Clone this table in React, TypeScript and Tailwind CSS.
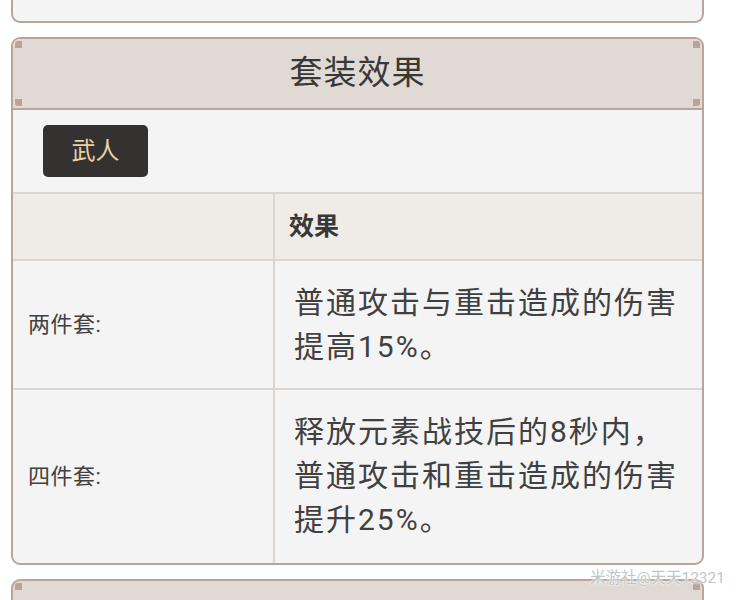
const font = { fontFamily: 'Roboto, "Noto Sans CJK SC", "Noto Sans", sans-serif' }

const Corner = ({ className }: { className: string }) => (
  <span className={`absolute w-[7px] h-[7px] bg-[#b9a49b] ${className}`} />
)

const rows = [
  { label: "两件套:", text: ["普通攻击与重击造成的伤害", "提高15%。"] },
  { label: "四件套:", text: ["释放元素战技后的8秒内，", "普通攻击和重击造成的伤害", "提升25%。"] },
]

export default function App() {
  return (
    <div className="relative w-[736px] h-[600px] overflow-hidden bg-white" style={font}>
      {/* previous card, cut off at the top */}
      <div className="ml-[11px] w-[693px] h-[23px] bg-[#f4f4f4] border-2 border-t-0 border-[#b9a59c] rounded-b-[9px]" />

      {/* set effect card */}
      <div className="ml-[11px] mt-[14px] w-[693px] bg-[#f4f4f4] border-2 border-[#b9a59c] rounded-[9px] overflow-hidden">
        <div className="relative h-[71px] bg-[#e1dad4] border-b-2 border-[#b9a59c] flex items-center justify-center pb-[2px]">
          <Corner className="left-[2px] top-[2px] rounded-tl-[3px]" />
          <Corner className="left-[2px] bottom-[2px] rounded-bl-[3px]" />
          <Corner className="right-[2px] top-[2px] rounded-tr-[3px]" />
          <Corner className="right-[2px] bottom-[2px] rounded-br-[3px]" />
          <span className="text-[33px] leading-none text-[#383838] tracking-[1px]">套装效果</span>
        </div>

        <div className="pl-[30px] pt-[15px] pb-[15px]">
          <div className="w-[105px] h-[52px] rounded-[5px] bg-[#333231] flex items-center justify-center">
            <span className="text-[24px] text-[#e8d3a4] leading-none">武人</span>
          </div>
        </div>

        <div className="grid grid-cols-[262px_1fr] border-t-2 border-[#ddd6d0]">
          <div className="h-[67px] bg-[#efebe7] border-r-2 border-b-2 border-[#ddd6d0]" />
          <div className="h-[67px] bg-[#efebe7] border-b-2 border-[#ddd6d0] flex items-center pl-[14px]">
            <span className="text-[25px] font-bold text-[#383838]">效果</span>
          </div>
          {rows.map((row, i) => {
            const last = i === rows.length - 1
            return (
              <div key={i} className="contents">
                <div className={`flex items-center pl-[15px] border-r-2 border-[#ddd6d0] ${last ? "" : "border-b-2"}`}>
                  <span className="text-[22px] text-[#404040] tracking-[0.5px]">{row.label}</span>
                </div>
                <div className={`flex items-center pl-[19px] pt-[20px] border-[#ddd6d0] ${last ? "pb-[21px]" : "pb-[19px] border-b-2"}`}>
                  <p className="text-[30px] leading-[44px] text-[#404040] tracking-[2px]">
                    {row.text.map((line, j) => (
                      <span key={j} className="block whitespace-nowrap">
                        {line}
                      </span>
                    ))}
                  </p>
                </div>
              </div>
            )
          })}
        </div>
      </div>

      {/* next card, cut off at the bottom */}
      <div className="relative ml-[11px] mt-[14px] w-[693px] h-[40px] bg-[#e1dad4] border-2 border-[#b9a59c] rounded-t-[9px]">
        <Corner className="left-[2px] top-[2px] rounded-tl-[3px]" />
        <Corner className="right-[2px] top-[2px] rounded-tr-[3px]" />
      </div>

      {/* watermark */}
      <span
        className="absolute left-[590px] top-[567px] text-[15.5px] text-[#c4c4c4] whitespace-nowrap"
        style={{ textShadow: "0 0 2px #fff, 0 0 2px #fff" }}
      >
        米游社@天天12321
      </span>
    </div>
  )
}
